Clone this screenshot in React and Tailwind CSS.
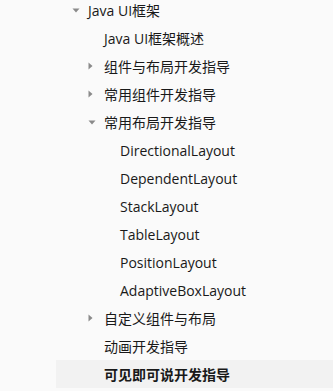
const rows = [
  { label: 'Java UI框架', level: 1, arrow: 'down' },
  { label: 'Java UI框架概述', level: 2 },
  { label: '组件与布局开发指导', level: 2, arrow: 'right' },
  { label: '常用组件开发指导', level: 2, arrow: 'right' },
  { label: '常用布局开发指导', level: 2, arrow: 'down' },
  { label: 'DirectionalLayout', level: 3 },
  { label: 'DependentLayout', level: 3 },
  { label: 'StackLayout', level: 3 },
  { label: 'TableLayout', level: 3 },
  { label: 'PositionLayout', level: 3 },
  { label: 'AdaptiveBoxLayout', level: 3 },
  { label: '自定义组件与布局', level: 2, arrow: 'right' },
  { label: '动画开发指导', level: 2 },
  { label: '可见即可说开发指导', level: 2, active: true },
]

const indent = { 1: 'pl-[16px]', 2: 'pl-[32px]', 3: 'pl-[48px]' }

function Arrow({ dir }) {
  if (dir === 'down') {
    return (
      <svg width="8" height="5" viewBox="0 0 8 5" className="block">
        <path d="M0.5 0.5 H7.5 L4 4.5 Z" fill="#8a8a8a" />
      </svg>
    )
  }
  return (
    <svg width="5" height="8" viewBox="0 0 5 8" className="block">
      <path d="M0.5 0.5 V7.5 L4.5 4 Z" fill="#8a8a8a" />
    </svg>
  )
}

export default function App() {
  return (
    <div
      className="h-[391px] w-[333px] overflow-hidden bg-[#fafafa] pl-[56px] text-[14px] text-[#191919]"
      style={{ fontFamily: '"Segoe UI", "Open Sans", "Noto Sans CJK SC", sans-serif' }}
    >
      <ul className="-mt-[4px]">
        {rows.map((r) => (
          <li
            key={r.label}
            className={`flex h-[28px] items-center ${indent[r.level]} ${r.active ? 'bg-[#f2f2f2] font-bold' : ''}`}
          >
            <span className="flex w-[16px] shrink-0 items-center">
              {r.arrow && <Arrow dir={r.arrow} />}
            </span>
            <span className="whitespace-nowrap">{r.label}</span>
          </li>
        ))}
      </ul>
    </div>
  )
}
